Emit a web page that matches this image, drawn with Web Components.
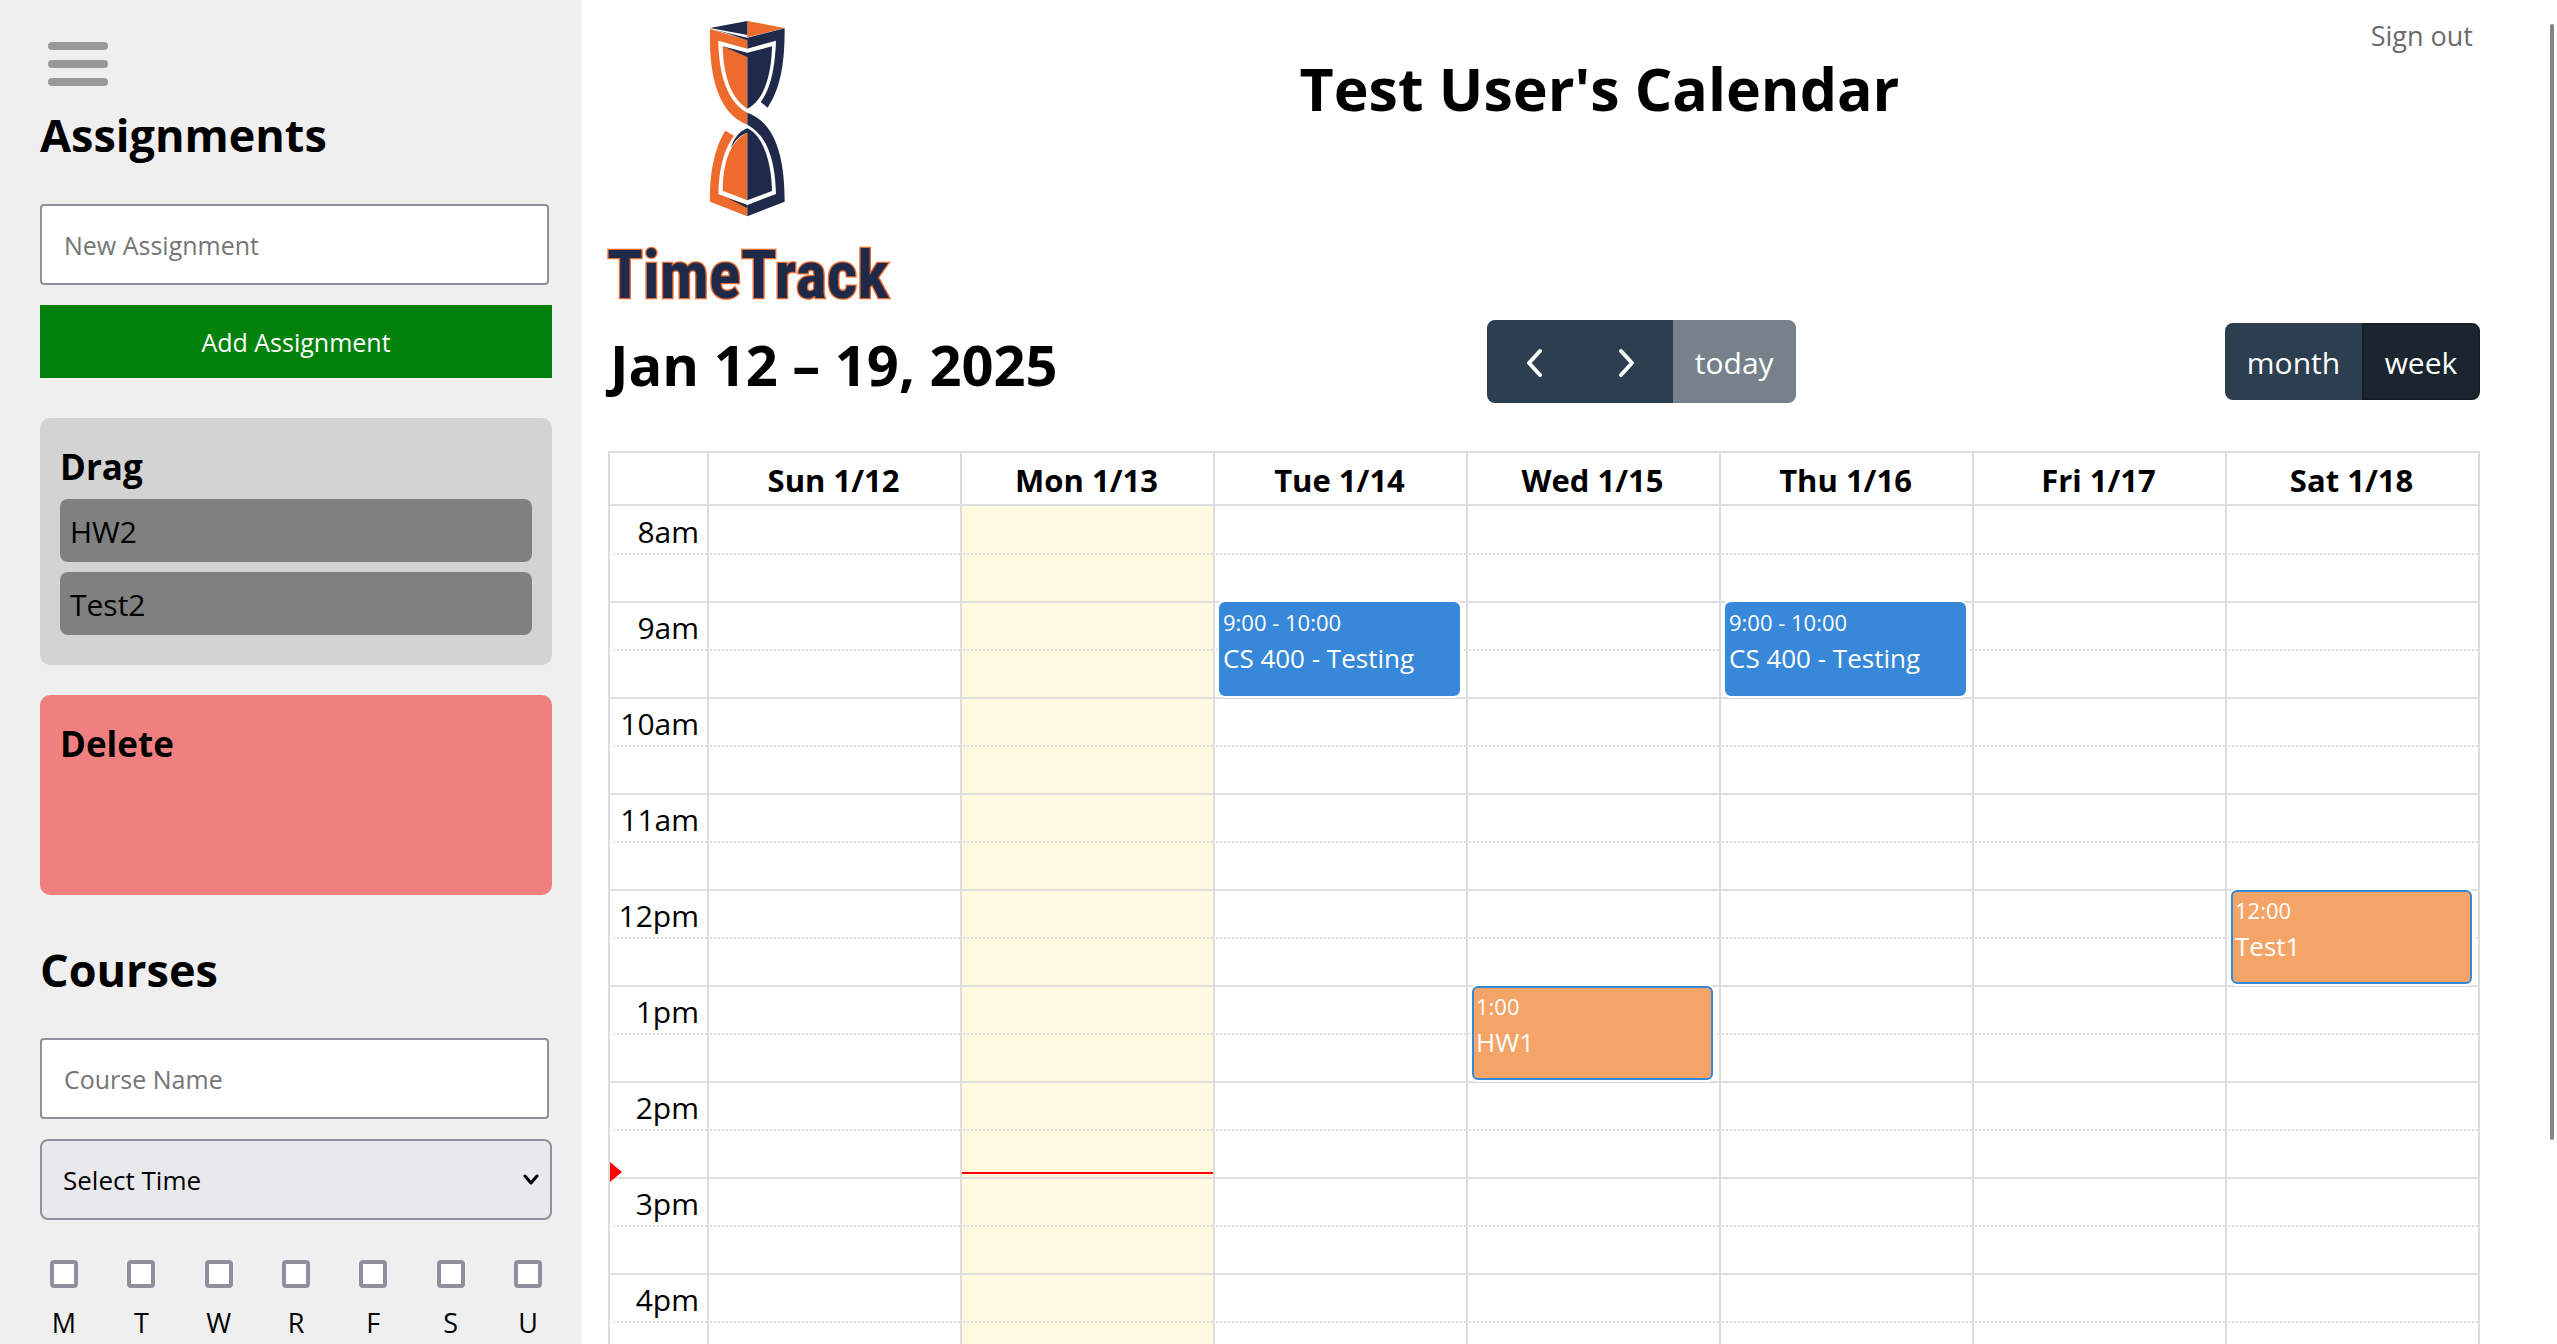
<!DOCTYPE html>
<html lang="en">
<head>
<meta charset="utf-8">
<title>TimeTrack</title>
<style>
  html, body { margin: 0; height: 100%; }
  body { font-family: "Open Sans", "Noto Sans", sans-serif; color: #000; background: #fff; overflow: hidden; }
</style>
</head>
<body>
<time-track-app></time-track-app>

<template id="tpl-app">
  <style>
    :host { display: flex; height: 100vh; overflow: hidden; background: #fff; }
    side-bar { flex: 0 0 582px; }
    main { flex: 1; min-width: 0; box-sizing: border-box; padding: 0 70px 0 26px; overflow: hidden; }
    scroll-track { flex: 0 0 7px; }
    header { display: flex; align-items: flex-start; }
    h1 { flex: 1; margin: 0; padding-top: 45px; font-size: 59px; line-height: 86px; text-align: center; }
    .session { flex: 0 0 171px; box-sizing: border-box; padding: 14px 7px 0 0; text-align: right; }
    .session button { border: 0; padding: 0; background: none; font: inherit; font-size: 27px; line-height: 44px; color: #6b6b6b; }
  </style>
  <side-bar></side-bar>
  <main>
    <header>
      <brand-logo></brand-logo>
      <h1>Test User's Calendar</h1>
      <div class="session"><button type="button">Sign out</button></div>
    </header>
    <calendar-toolbar></calendar-toolbar>
    <week-grid></week-grid>
  </main>
  <scroll-track></scroll-track>
</template>

<template id="tpl-sidebar">
  <style>
    :host { display: flex; flex-direction: column; box-sizing: border-box; padding: 42px 30px 0 40px; background: #efefef; }
    .menu { display: flex; flex-direction: column; gap: 10px; width: 76px; padding: 0 8px; border: 0; background: none; }
    .menu span { height: 8px; border-radius: 4px; background: #999; }
    h2 { margin: 17px 0 37px; font-size: 45px; line-height: 64px; }
    h2.later { margin: 43px 0 36px; }
    form { display: flex; flex-direction: column; gap: 20px; }
    input { box-sizing: border-box; width: calc(100% - 3px); height: 81px; margin: 0; padding: 0 22px; border: 2px solid #8f8f9d; border-radius: 4px; background: #fff; font: inherit; font-size: 25px; }
    input::placeholder { color: #757575; opacity: 1; }
    .add { height: 73px; border: 0; padding: 0; background: #02810b; color: #fff; font: inherit; font-size: 25px; }
    .picker { display: grid; position: relative; }
    select { appearance: none; height: 81px; margin: 0; padding: 0 22px 0 21px; border: 2px solid #8f8f9d; border-radius: 8px; background: #e9e9ed; color: #000; font: inherit; font-size: 26px; }
    .picker svg { position: absolute; right: 13px; top: 35px; pointer-events: none; }
    drop-zone { margin-top: 40px; }
    drop-zone + drop-zone { margin-top: 30px; }
    .days { display: flex; justify-content: space-between; margin-top: 20px; padding: 0 10px; }
  </style>
  <button class="menu" type="button" aria-label="Toggle menu"><span></span><span></span><span></span></button>
  <h2>Assignments</h2>
  <form>
    <input type="text" placeholder="New Assignment" aria-label="New Assignment">
    <button class="add" type="button">Add Assignment</button>
  </form>
  <drop-zone heading="Drag">
    <drag-item>HW2</drag-item>
    <drag-item>Test2</drag-item>
  </drop-zone>
  <drop-zone heading="Delete" kind="delete"></drop-zone>
  <h2 class="later">Courses</h2>
  <form>
    <input type="text" placeholder="Course Name" aria-label="Course Name">
    <div class="picker">
      <select aria-label="Time"><option>Select Time</option></select>
      <svg width="16" height="12" viewBox="0 0 16 12" fill="none" stroke="#000" stroke-width="3" stroke-linecap="round" stroke-linejoin="round"><path d="M2 2l6 7 6-7"/></svg>
    </div>
    <div class="days">
      <day-check>M</day-check><day-check>T</day-check><day-check>W</day-check><day-check>R</day-check><day-check>F</day-check><day-check>S</day-check><day-check>U</day-check>
    </div>
  </form>
</template>

<template id="tpl-zone">
  <style>
    :host { display: block; box-sizing: border-box; min-height: 200px; padding: 20px; border-radius: 10px; background: #d3d3d3; }
    :host([kind="delete"]) { background: #f08080; }
    h3 { margin: 0 0 4px; font-size: 35px; line-height: 57px; }
  </style>
  <h3></h3>
  <slot></slot>
</template>

<template id="tpl-item">
  <style>
    :host { display: block; margin-bottom: 10px; padding: 2px 10px 0; border-radius: 8px; background: #808080; font-size: 30px; line-height: 61px; }
  </style>
  <slot></slot>
</template>

<template id="tpl-day">
  <style>
    :host { display: block; width: 28px; }
    label { display: flex; flex-direction: column; align-items: center; gap: 17px; font-size: 27px; line-height: 36px; }
    input { appearance: none; box-sizing: border-box; width: 28px; height: 28px; margin: 0; border: 4px solid #8f8f9d; border-radius: 4px; background: #fff; }
  </style>
  <label><input type="checkbox"><slot></slot></label>
</template>

<template id="tpl-logo">
  <style>
    :host { display: block; flex: 0 0 282px; height: 320px; }
    svg { display: block; overflow: visible; }
    text { font-family: "Roboto Condensed", Roboto, "Liberation Sans", sans-serif; font-weight: 700; font-size: 199px; fill: #1f2a4a; stroke: #ec6b2d; stroke-width: 8px; paint-order: stroke; }
  </style>
  <svg width="282" height="320" viewBox="54 0 846 960" role="img" aria-label="TimeTrack">
    <g fill="#ec6b2d">
      <path d="M472 63L584 84L472 112Z"/>
      <path d="M360 87L472 120V146L385 122C386 200 402 300 472 338V374C395 345 355 250 360 87Z"/>
      <path d="M398 139L472 169V326C420 295 400 220 398 139Z"/>
      <path d="M472 398C415 425 398 500 398 572L472 601Z"/>
      <path d="M406 392L432 407C400 450 387 510 385 582L472 615V649L360 605C358 520 375 440 406 392Z"/>
    </g>
    <g fill="#1f2a4a">
      <path d="M360 84L472 63V105Z"/>
      <path d="M360 86L472 113L584 85C584 180 575 260 533 323L512 306C548 260 556 180 558 122L472 146V121L410 100Z"/>
      <path d="M398 139L472 158L546 139C545 200 532 295 472 326V171Z"/>
      <path d="M472 338C560 370 584 480 584 605L472 649V615L558 582C556 500 540 410 472 374Z"/>
      <path d="M472 385C525 410 545 500 546 573L472 601V398C450 405 436 420 423 444C430 415 450 393 472 385Z"/>
      <path d="M412 594L472 615V624Z"/>
    </g>
    <text x="51" y="895">TimeTrack</text>
  </svg>
</template>

<template id="tpl-toolbar">
  <style>
    :host { display: flex; justify-content: space-between; align-items: center; margin-bottom: 48px; }
    h2 { margin: 0; padding: 6px 0 0 2px; font-size: 56px; line-height: 77px; }
    .group { display: flex; }
    button { box-sizing: border-box; display: flex; align-items: center; justify-content: center; height: 77px; margin: 0; padding: 2px 0 0; border: 2px solid #2c3e50; background: #2c3e50; color: #fff; font: inherit; font-size: 30px; line-height: 48px; }
    button:first-child { border-radius: 8px 0 0 8px; }
    button:last-child { border-radius: 0 8px 8px 0; }
    .nav button { height: 83px; width: 93px; }
    .nav .today { width: 123px; background: #77818c; border-color: #77818c; }
    .views .month { width: 137px; }
    .views .week { width: 118px; background: #1a252f; border-color: #151e27; }
  </style>
  <h2>Jan 12 – 19, 2025</h2>
  <div class="group nav">
    <button type="button" aria-label="Previous week"><svg width="18" height="30" viewBox="0 0 18 30" fill="none" stroke="#fff" stroke-width="4" stroke-linecap="round" stroke-linejoin="round"><path d="M16 3L5 15l11 12"/></svg></button>
    <button type="button" aria-label="Next week"><svg width="18" height="30" viewBox="0 0 18 30" fill="none" stroke="#fff" stroke-width="4" stroke-linecap="round" stroke-linejoin="round"><path d="M4 3l11 12L4 27"/></svg></button>
    <button class="today" type="button">today</button>
  </div>
  <div class="group views">
    <button class="month" type="button">month</button>
    <button class="week" type="button">week</button>
  </div>
</template>

<template id="tpl-grid">
  <style>
    :host { display: block; }
    table { width: 100%; table-layout: fixed; border-collapse: separate; border-spacing: 0; border-right: 2px solid #ddd; }
    col.axis { width: 99px; }
    th, td { box-sizing: border-box; height: 48px; padding: 0; border: 0 solid #ddd; border-width: 2px 0 0 2px; }
    thead th { height: 53px; padding: 2px 2px 0 0; font-size: 31px; line-height: 48px; }
    tbody th { padding: 4px 8px 0 0; font-size: 30px; font-weight: 400; line-height: 42px; text-align: right; }
    tbody tr:first-child td { height: 49px; }
    td { position: relative; }
    .half td { border-top-style: dotted; }
    .today { background: #fff9e0; }
    calendar-event { position: absolute; z-index: 1; top: -1px; left: 4px; right: 6px; height: 94px; }
    .now { position: absolute; left: 0; right: 0; top: 41px; height: 2px; background: #f00; }
    .arrow { position: absolute; z-index: 1; left: 0; top: 31px; border: 10px solid transparent; border-left: 12px solid #f00; border-right: 0; }
  </style>
  <table>
    <colgroup><col class="axis"><col span="7"></colgroup>
    <thead><tr></tr></thead>
    <tbody></tbody>
  </table>
</template>

<template id="tpl-event">
  <style>
    :host { display: flex; flex-direction: column; box-sizing: border-box; padding: 1px 2px; border: 2px solid #3788d8; border-radius: 6px; background: #3788d8; box-shadow: 0 0 0 2px #fff; color: #fff; overflow: hidden; }
    :host([kind="task"]) { background: #f4a466; }
    time { font-size: 22px; line-height: 34px; }
    span { font-size: 26px; line-height: 38px; }
  </style>
  <time></time>
  <span><slot></slot></span>
</template>

<template id="tpl-scroll">
  <style>
    :host { display: block; box-sizing: border-box; padding-top: 24px; }
    div { width: 4px; height: 83vh; border-radius: 2px; background: #858585; }
  </style>
  <div></div>
</template>

<script>
  class TemplateElement extends HTMLElement {
    constructor(id) {
      super();
      this.attachShadow({ mode: "open" }).append(document.getElementById(id).content.cloneNode(true));
    }
  }

  customElements.define("drag-item", class extends TemplateElement { constructor() { super("tpl-item"); } });
  customElements.define("brand-logo", class extends TemplateElement { constructor() { super("tpl-logo"); } });
  customElements.define("calendar-toolbar", class extends TemplateElement { constructor() { super("tpl-toolbar"); } });
  customElements.define("scroll-track", class extends TemplateElement { constructor() { super("tpl-scroll"); } });
  customElements.define("day-check", class extends TemplateElement { constructor() { super("tpl-day"); } });

  customElements.define("drop-zone", class extends TemplateElement {
    constructor() { super("tpl-zone"); }
    connectedCallback() { this.shadowRoot.querySelector("h3").textContent = this.getAttribute("heading"); }
  });

  customElements.define("calendar-event", class extends TemplateElement {
    constructor() { super("tpl-event"); }
    connectedCallback() { this.shadowRoot.querySelector("time").textContent = this.getAttribute("time"); }
  });

  customElements.define("week-grid", class extends TemplateElement {
    constructor() {
      super("tpl-grid");
      const days = ["Sun 1/12", "Mon 1/13", "Tue 1/14", "Wed 1/15", "Thu 1/16", "Fri 1/17", "Sat 1/18"];
      const hours = ["8am", "9am", "10am", "11am", "12pm", "1pm", "2pm", "3pm", "4pm"];
      const today = 1;
      const events = {
        "9am-2": ["9:00 - 10:00", "CS 400 - Testing", "course"],
        "9am-4": ["9:00 - 10:00", "CS 400 - Testing", "course"],
        "12pm-6": ["12:00", "Test1", "task"],
        "1pm-3": ["1:00", "HW1", "task"]
      };
      const root = this.shadowRoot;
      root.querySelector("thead tr").innerHTML = "<td></td>" + days.map(d => `<th scope="col">${d}</th>`).join("");
      root.querySelector("tbody").innerHTML = hours.map(hour => {
        const cells = half => days.map((_, i) => {
          const ev = !half && events[`${hour}-${i}`];
          const body = ev ? `<calendar-event time="${ev[0]}" kind="${ev[2]}">${ev[1]}</calendar-event>` : "";
          const now = half && hour === "2pm" && i === today ? '<div class="now"></div>' : "";
          return `<td${i === today ? ' class="today"' : ""}>${body}${now}</td>`;
        }).join("");
        const arrow = hour === "2pm" ? '<div class="arrow"></div>' : "";
        return `<tr><th scope="row">${hour}</th>${cells(false)}</tr><tr class="half"><td>${arrow}</td>${cells(true)}</tr>`;
      }).join("");
    }
  });

  customElements.define("side-bar", class extends TemplateElement { constructor() { super("tpl-sidebar"); } });
  customElements.define("time-track-app", class extends TemplateElement { constructor() { super("tpl-app"); } });
</script>
</body>
</html>
